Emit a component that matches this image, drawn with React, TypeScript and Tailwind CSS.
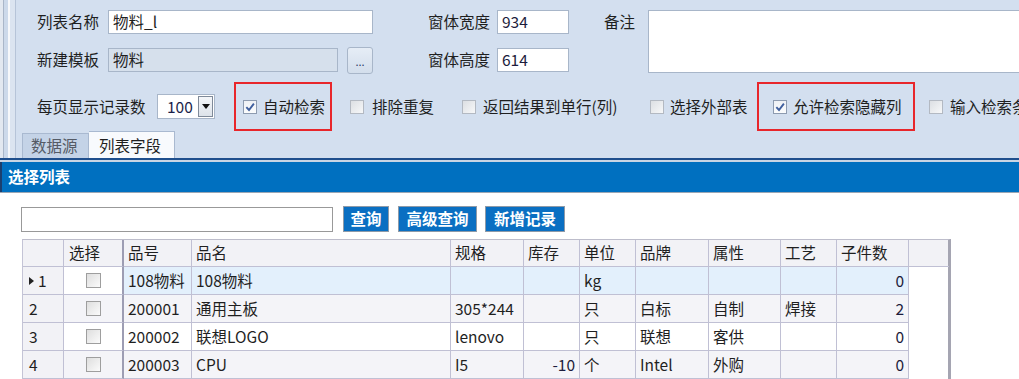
import React from "react";

const CheckBox = ({ checked = false }: { checked?: boolean }) => (
  <span
    className={
      "flex h-[14px] w-[14px] shrink-0 items-center justify-center border " +
      (checked
        ? "border-[#8d9bb0] bg-linear-to-b from-[#eef1f5] to-[#fbfcfd]"
        : "border-[#b3b9c2] bg-linear-to-br from-[#dcdfe3] to-[#f7f8f9]")
    }
  >
    {checked && (
      <svg width="10" height="10" viewBox="0 0 9 9">
        <path d="M1.2 4.6 L3.6 7.2 L8 1.4" fill="none" stroke="#3f5f9e" strokeWidth="1.7" />
      </svg>
    )}
  </span>
);

const columns = [
  { title: "品号", w: "w-[68px]", right: false },
  { title: "品名", w: "w-[259px]", right: false },
  { title: "规格", w: "w-[73px]", right: false },
  { title: "库存", w: "w-[56px]", right: true },
  { title: "单位", w: "w-[56px]", right: false },
  { title: "品牌", w: "w-[73px]", right: false },
  { title: "属性", w: "w-[72px]", right: false },
  { title: "工艺", w: "w-[56px]", right: false },
  { title: "子件数", w: "w-[72px]", right: true },
];

const rows = [
  ["108物料", "108物料", "", "", "kg", "", "", "", "0"],
  ["200001", "通用主板", "305*244", "", "只", "白标", "自制", "焊接", "2"],
  ["200002", "联想LOGO", "lenovo", "", "只", "联想", "客供", "", "0"],
  ["200003", "CPU", "I5", "-10", "个", "Intel", "外购", "", "0"],
];

const cell = "box-border flex h-full shrink-0 items-center border-r border-b border-[#c0c0d4] px-[4px]";

export default function App() {
  return (
    <div className="h-[379px] w-[1019px] overflow-hidden bg-white font-['Noto_Sans_CJK_SC',sans-serif] text-[15.5px] leading-none text-[#1f1f1f]">
      {/* top form panel */}
      <div className="flex h-[158px]">
        <div className="flex h-full w-[16px] shrink-0">
          <div className="h-full w-[3px] bg-[#e2e8f0]" />
          <div className="h-full w-[1px] bg-[#a9b6c8]" />
          <div className="h-full w-[4px] bg-[#ccd9ea]" />
          <div className="h-full w-[2px] bg-[#f6f8fb]" />
          <div className="h-full w-[5px] bg-[#dbe4f0]" />
          <div className="h-full w-[1px] bg-[#b6c4d8]" />
        </div>
        <div className="flex min-w-0 flex-1 flex-col overflow-hidden bg-[#d3dfef]">
          <div className="flex pt-[10px] pl-[21px]">
            <div className="flex flex-col gap-[14px]">
              <div className="flex h-[24px] items-center">
                <span className="w-[71px]">列表名称</span>
                <div className="box-border flex h-[24px] w-[265px] items-center border border-[#a8b6c9] bg-white pl-[4px]">
                  物料_l
                </div>
                <span className="w-[124px] pr-[7px] text-right">窗体宽度</span>
                <div className="box-border flex h-[24px] w-[72px] items-center border border-[#a8b6c9] bg-white pl-[4px] text-[#1c1c3c]">
                  934
                </div>
              </div>
              <div className="flex h-[24px] items-center">
                <span className="w-[71px]">新建模板</span>
                <div className="box-border flex h-[24px] w-[230px] items-center border border-[#a8b6c9] bg-[#d6e0ec] pl-[4px]">
                  物料
                </div>
                <div className="ml-[9px] box-border flex h-[27px] w-[26px] items-end justify-center rounded-[3px] border border-[#a8b6c9] bg-linear-to-b from-[#e6edf6] to-[#d3deec] pb-[6px] text-[11px] text-[#2a3d6a]">
                  ...
                </div>
                <span className="w-[124px] pr-[7px] text-right">窗体高度</span>
                <div className="box-border flex h-[24px] w-[72px] items-center border border-[#a8b6c9] bg-white pl-[4px] text-[#1c1c3c]">
                  614
                </div>
              </div>
            </div>
            <span className="flex h-[24px] w-[79px] shrink-0 items-center justify-end pr-[13px]">备注</span>
            <div className="box-border h-[63px] w-[420px] shrink-0 border border-[#a8b6c9] bg-white" />
          </div>

          <div className="mt-[9px] flex h-[49px] items-center pl-[21px] whitespace-nowrap">
            <span className="w-[120px] shrink-0">每页显示记录数</span>
            <div className="box-border flex h-[25px] w-[58px] shrink-0 border border-[#a8b6c9] bg-white">
              <span className="flex flex-1 items-center pl-[9px] text-[#1a1f4a]">100</span>
              <span className="my-[1px] mr-[1px] box-border flex w-[15px] items-center justify-center border border-[#7f8a99] bg-linear-to-b from-[#f4f6f9] to-[#dde3ea]">
                <svg width="8" height="5" viewBox="0 0 8 5">
                  <path d="M0 0 H8 L4 5 Z" fill="#111" />
                </svg>
              </span>
            </div>
            <div className="ml-[19px] box-border flex h-[49px] w-[98px] shrink-0 items-center border-2 border-[#e8262b] pl-[7px]">
              <CheckBox checked />
              <span className="ml-[6px]">自动检索</span>
            </div>
            <div className="ml-[18px] flex shrink-0 items-center">
              <CheckBox />
              <span className="ml-[8px] w-[63px]">排除重复</span>
            </div>
            <div className="ml-[27px] flex shrink-0 items-center">
              <CheckBox />
              <span className="ml-[7px] w-[140px]">返回结果到单行(列)</span>
            </div>
            <div className="ml-[27px] flex shrink-0 items-center">
              <CheckBox />
              <span className="ml-[6px] w-[75px]">选择外部表</span>
            </div>
            <div className="ml-[12px] box-border flex h-[49px] w-[158px] shrink-0 items-center border-2 border-[#e8262b] pl-[14px]">
              <CheckBox checked />
              <span className="ml-[6px]">允许检索隐藏列</span>
            </div>
            <div className="ml-[14px] flex shrink-0 items-center">
              <CheckBox />
              <span className="ml-[7px]">输入检索条件</span>
            </div>
          </div>

          <div className="flex h-[27px] items-end pl-[6px]">
            <div className="box-border flex h-[25px] w-[67px] items-center border border-b-0 border-[#a9b9d0] bg-[#c4d3e7] pl-[8px] text-[#555b66]">
              数据源
            </div>
            <div className="box-border flex h-[28px] w-[86px] items-center border border-b-0 border-l-0 border-[#a9b9d0] bg-[#f8fafd] pl-[10px] -mb-px">
              列表字段
            </div>
          </div>
        </div>
      </div>

      {/* separator lines + title bar */}
      <div className="h-[2px] bg-[#1f4f8d]" />
      <div className="h-[2px] bg-[#c9d5e4]" />
      <div className="flex h-[30px] items-center border-l-2 border-[#1b3f6e] bg-[#0070c0] pl-[6px] text-[15.5px] font-bold text-white">
        选择列表
      </div>
      <div className="h-[1px] bg-[#9aa6b4]" />

      {/* search row */}
      <div className="mt-[13px] flex h-[26px] items-center pl-[21px]">
        <div className="box-border h-[25px] w-[312px] border border-[#999] bg-white" />
        <div className="ml-[10px] box-border flex h-[26px] w-[46px] items-center justify-center border border-[#8e9aa8] bg-[#0a6fc2] font-bold text-white">
          查询
        </div>
        <div className="ml-[9px] box-border flex h-[26px] w-[79px] items-center justify-center border border-[#8e9aa8] bg-[#0a6fc2] font-bold text-white">
          高级查询
        </div>
        <div className="ml-[8px] box-border flex h-[26px] w-[80px] items-center justify-center border border-[#8e9aa8] bg-[#0a6fc2] font-bold text-white">
          新增记录
        </div>
      </div>

      {/* grid */}
      <div className="mt-[7px] ml-[22px] box-border w-[929px] border-t border-r-[3px] border-l border-t-[#bdbdcb] border-r-[#a5a5b2] border-l-[#c4c4d6]">
        <div className="flex h-[27px] bg-[#f2f2f6]">
          <div className={cell + " w-[41px]"} />
          <div className={cell + " w-[60px] border-r-2 border-r-[#9d9db3] pl-[5px]"}>选择</div>
          {columns.map((c) => (
            <div key={c.title} className={cell + " " + c.w}>
              {c.title}
            </div>
          ))}
          <div className={cell + " w-[40px] border-r-0"} />
        </div>
        {rows.map((r, i) => {
          const bg = i === 0 ? "bg-[#e3f0fc]" : i % 2 === 1 ? "bg-[#f4f4f8]" : "bg-white";
          const selBg = i === 1 || i === 3 ? "bg-[#f4f4f8]" : "bg-white";
          return (
            <div key={i} className="flex h-[28px]">
              <div className={cell + " w-[41px] bg-[#f2f2f6] pl-[6px]"}>
                {i === 0 && (
                  <svg width="5" height="8" viewBox="0 0 5 8" className="mr-[4px]">
                    <path d="M0 0 L5 4 L0 8 Z" fill="#222" />
                  </svg>
                )}
                {i + 1}
              </div>
              <div className={cell + " w-[60px] justify-center border-r-2 border-r-[#9d9db3] " + selBg}>
                <span className="box-border h-[15px] w-[15px] border border-[#9e9e9e] bg-linear-to-br from-[#dedede] to-[#fbfbfb]" />
              </div>
              {columns.map((c, j) => (
                <div
                  key={c.title}
                  className={cell + " " + c.w + " " + bg + (c.right ? " justify-end text-[#1c1c3c]" : "")}
                >
                  {r[j]}
                </div>
              ))}
            </div>
          );
        })}
      </div>
    </div>
  );
}
